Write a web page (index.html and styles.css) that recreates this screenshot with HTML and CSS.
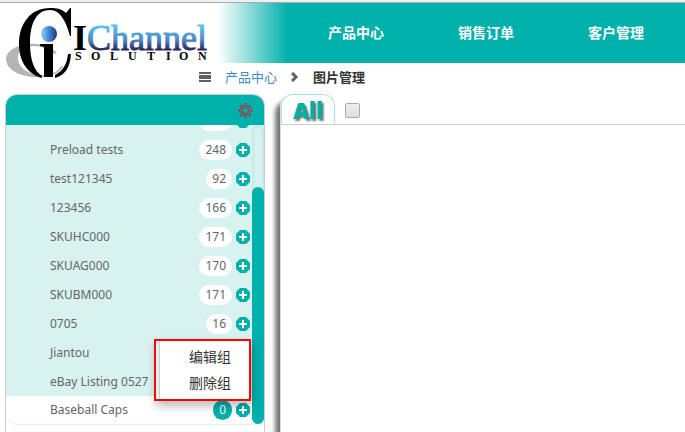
FILE: index.html
```html
<!DOCTYPE html>
<html lang="zh-CN">
<head>
<meta charset="utf-8">
<title>图片管理</title>
<link rel="stylesheet" href="styles.css">
</head>
<body>
<svg class="symbols" aria-hidden="true">
  <symbol id="plus" viewBox="0 0 14 14">
    <path fill="#00b0ab" d="M4 0h6l4 4v6l-4 4H4l-4-4V4z"/>
    <path fill="#fff" d="M6 3h2v3h3v2H8v3H6V8H3V6h3z"/>
  </symbol>
</svg>
<header class="topbar">
  <a class="logo" href="#" aria-label="IChannel Solution">
    <svg width="206" height="72" viewBox="0 0 206 72">
      <defs>
        <linearGradient id="blue" x1="0" y1="0" x2="0" y2="1">
          <stop offset="0.2" stop-color="#58c4f4"/>
          <stop offset="0.55" stop-color="#5085c4"/>
          <stop offset="0.8" stop-color="#272458"/>
        </linearGradient>
        <linearGradient id="ball">
          <stop offset="0" stop-color="#91d5f6"/>
          <stop offset="0.45" stop-color="#438fd6"/>
          <stop offset="1" stop-color="#263477"/>
        </linearGradient>
      </defs>
      <path fill="#b5b5b5" fill-rule="evenodd" d="M24 36C10 37 0 43 0 51c0 11 15 18 30 18 14 0 25-4 27-11h-2c-3 6-10 9-19 9C22 67 12 59 12 50c0-8 5-12 14-12 10 0 18 3 22 8l3-1c-5-6-15-10-27-9z"/>
      <path d="M65 0v28h-1C60 13 54 2 44 2 29 2 24 18 24 35c0 17 4 28 12 33v2C22 66 13 54 13 36 13 15 25 0 44 0c7 0 12 1 16 5l4-5zM65 46c-1 14-6 21-16 24v-3c8-4 12-11 13-21z"/>
      <path d="M34 36h13v33h-9V39l-4-1z"/>
      <circle cx="43" cy="26" r="8" fill="url(#ball)"/>
      <text class="logo-initial" x="67" y="42">I</text>
      <text class="logo-name" x="81" y="42" fill="url(#blue)" stroke="url(#blue)">Channel</text>
      <text class="logo-sub" y="52" x="69 85 104 122 141 160 173 192">SOLUTION</text>
    </svg>
  </a>
  <nav class="nav">
    <a href="#">产品中心</a>
    <a href="#">销售订单</a>
    <a href="#">客户管理</a>
  </nav>
</header>
<nav class="crumbs">
  <svg width="12" height="10" viewBox="0 0 12 10"><path fill="#606060" d="M0 0h12v2H0zM0 3h12v4H0zM0 8h12v2H0z"/></svg>
  <a href="#">产品中心</a>
  <svg width="8" height="10" viewBox="0 0 8 10"><path fill="none" stroke="#606060" stroke-width="3" d="M1 1l4 4-4 4"/></svg>
  <strong>图片管理</strong>
</nav>
<div class="workspace">
  <aside class="sidebar">
    <div class="side-head">
      <button class="gear" aria-label="设置">
        <svg width="15" height="15" viewBox="0 0 16 16"><path fill="#666" fill-rule="evenodd" d="M6.500 0h3v2.200l1.300.5 1.700-1.500 2.200 2.200-1.500 1.700.6 1.400H16v3h-2.200l-.6 1.400 1.500 1.700-2.200 2.200-1.700-1.500-1.300.5V16h-3v-2.200l-1.300-.5-1.700 1.500-2.200-2.200 1.500-1.700-.6-1.400H0v-3h2.200l.6-1.400-1.500-1.700 2.200-2.200 1.700 1.500 1.300-.5zM8 5.500a2.500 2.500 0 100 5 2.500 2.500 0 000-5z"/></svg>
      </button>
    </div>
    <div class="side-body">
      <ul class="groups">
        <li><span class="name">iPort</span><span class="count">220</span><button class="add" aria-label="添加"><svg width="14" height="14"><use href="#plus"/></svg></button></li>
        <li><span class="name">Preload tests</span><span class="count">248</span><button class="add" aria-label="添加"><svg width="14" height="14"><use href="#plus"/></svg></button></li>
        <li><span class="name">test121345</span><span class="count">92</span><button class="add" aria-label="添加"><svg width="14" height="14"><use href="#plus"/></svg></button></li>
        <li><span class="name">123456</span><span class="count">166</span><button class="add" aria-label="添加"><svg width="14" height="14"><use href="#plus"/></svg></button></li>
        <li><span class="name">SKUHC000</span><span class="count">171</span><button class="add" aria-label="添加"><svg width="14" height="14"><use href="#plus"/></svg></button></li>
        <li><span class="name">SKUAG000</span><span class="count">170</span><button class="add" aria-label="添加"><svg width="14" height="14"><use href="#plus"/></svg></button></li>
        <li><span class="name">SKUBM000</span><span class="count">171</span><button class="add" aria-label="添加"><svg width="14" height="14"><use href="#plus"/></svg></button></li>
        <li><span class="name">0705</span><span class="count">16</span><button class="add" aria-label="添加"><svg width="14" height="14"><use href="#plus"/></svg></button></li>
        <li><span class="name">Jiantou</span></li>
        <li><span class="name">eBay Listing 0527</span></li>
        <li class="top-level"><span class="name">Baseball Caps</span><span class="count">0</span><button class="add" aria-label="添加"><svg width="14" height="14"><use href="#plus"/></svg></button></li>
      </ul>
      <div class="track"><div class="thumb"></div></div>
    </div>
    <div class="menu-frame">
      <div class="menu">
        <button>编辑组</button>
        <button>删除组</button>
      </div>
    </div>
  </aside>
  <main class="panel">
    <div class="tabs">
      <button class="tab">All</button>
      <input class="check" type="checkbox" aria-label="全选">
    </div>
  </main>
</div>
</body>
</html>
```
FILE: styles.css
```css
* { box-sizing: border-box; }
body {
  margin: 0;
  height: 100vh;
  display: flex;
  flex-direction: column;
  overflow: hidden;
  background: #fff;
  color: #666;
  font: 12px/20px "Noto Sans", "Noto Sans CJK SC", sans-serif;
}
a { text-decoration: none; }
button {
  border: 0;
  padding: 0;
  background: none;
  font: inherit;
  color: inherit;
}
svg { display: block; }
.symbols { position: absolute; width: 0; height: 0; }

.topbar {
  position: relative;
  flex: none;
  height: 63px;
  border-top: 2px solid #f0f0f0;
  box-shadow: inset 0 1px #aaa;
  background: linear-gradient(90deg, #fff 218px, #00b0ab 288px);
}
.logo { position: absolute; left: 6px; top: 6px; }
.logo-initial { font: bold 36px "Liberation Serif", serif; }
.logo-name { font: 36px "Liberation Serif", serif; }
.logo-sub { font: bold 12px "Liberation Serif", serif; }
.nav {
  display: flex;
  padding: 1px 0 0 291px;
  line-height: 60px;
}
.nav a {
  flex: none;
  width: 130px;
  text-align: center;
  color: #fff;
  font-size: 14px;
  font-weight: bold;
}

.crumbs {
  flex: none;
  display: flex;
  align-items: center;
  gap: 14px;
  height: 31px;
  padding: 0 0 3px 199px;
  font-size: 13px;
}
.crumbs a { color: #428bca; }
.crumbs strong { color: #333; }

.workspace {
  flex: 1;
  display: flex;
  gap: 15px;
  padding-left: 5px;
}
.sidebar {
  position: relative;
  flex: none;
  width: 260px;
  border: 1px solid #ccc;
  border-bottom: 0;
  border-radius: 12px 12px 0 0;
}
.side-head {
  display: flex;
  justify-content: flex-end;
  align-items: center;
  height: 30px;
  padding-right: 11px;
  border-radius: 11px 11px 0 0;
  background: #00b0ab;
}
.side-body {
  display: flex;
  height: 300px;
  overflow: hidden;
  background: linear-gradient(#d8f2f0 271px, #fff 271px);
}
.groups {
  flex: 1;
  margin: -19px 0 0;
  padding: 0;
  list-style: none;
}
.groups li {
  display: flex;
  align-items: center;
  gap: 4px;
  height: 29px;
  padding: 0 2px 0 44px;
}
.groups .top-level {
  border-bottom: 1px solid #d8f2f0;
  border-radius: 8px 0 0 12px;
  background: #fff;
}
.name { flex: 1; white-space: nowrap; }
.count {
  padding: 0 6px;
  border-radius: 10px;
  background: #fff;
}
.top-level .count { background: #00b0ab; color: #fff; }
.track {
  flex: none;
  width: 12px;
  height: 299px;
  padding-top: 62px;
  border-radius: 6px;
  background: #d8f2f0;
  box-shadow: inset 0 0 4px #9cdeda;
}
.thumb {
  height: 100%;
  border-radius: 6px;
  background: #00b0ab;
}

.menu-frame {
  position: absolute;
  left: 148px;
  top: 244px;
  width: 97px;
  padding-left: 3px;
  border: 2px solid #f00;
  box-shadow: 2px 5px 9px #0004;
}
.menu {
  display: flex;
  flex-direction: column;
  padding: 3px 0;
  border-left: 1px solid #ccc;
  background: #fff;
}
.menu button {
  height: 26px;
  padding-left: 29px;
  text-align: left;
  color: #333;
  font-size: 14px;
}

.panel {
  flex: 1;
  border-left: 1px solid #ddd;
  border-radius: 12px 0 0;
  background: #fff;
  box-shadow: -5px 7px 4px #777;
}
.tabs {
  display: flex;
  align-items: center;
  gap: 10px;
  height: 31px;
  border-bottom: 1px solid #ccc;
}
.tab {
  width: 54px;
  height: 30px;
  border: 1px solid #a9e2e0;
  border-bottom: 0;
  border-radius: 12px 12px 0 0;
  color: #00b0ab;
  font: 800 22px/30px "Open Sans", sans-serif;
  text-shadow: 2px 2px 2px #777;
}
.check {
  appearance: none;
  width: 15px;
  height: 15px;
  margin: 2px 0 0;
  border: 1px solid #aaa;
  border-radius: 2px;
  background: linear-gradient(#eee, #ddd);
}
```
